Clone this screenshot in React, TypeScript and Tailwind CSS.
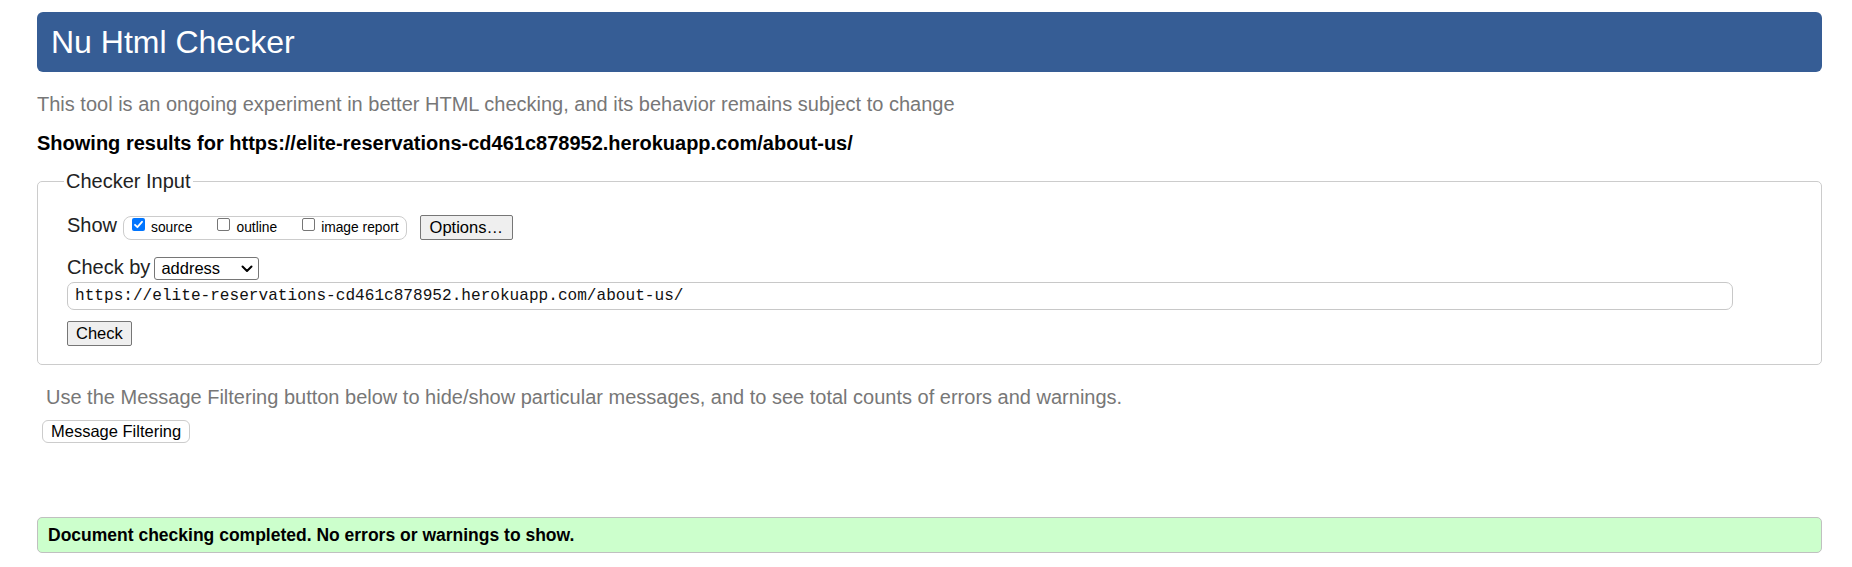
const PAGE_URL = "https://elite-reservations-cd461c878952.herokuapp.com/about-us/";

const SHOW_OPTIONS = [
  { label: "source", checked: true },
  { label: "outline", checked: false },
  { label: "image report", checked: false },
];

function Checkbox({ checked }: { checked: boolean }) {
  if (checked) {
    return (
      <span className="mb-[7px] flex h-[13px] w-[13px] items-center justify-center rounded-[2px] bg-[#0075ff]">
        <svg width="11" height="11" viewBox="0 0 11 11" fill="none">
          <path d="M2 5.8 L4.4 8.2 L9 2.8" stroke="white" strokeWidth="1.8" strokeLinecap="round" strokeLinejoin="round" />
        </svg>
      </span>
    );
  }
  return <span className="mb-[7px] block h-[13px] w-[13px] rounded-[2px] border border-[#767676] bg-white" />;
}

export default function App() {
  return (
    <div className="min-h-screen bg-white pl-[37px] pr-[30px] pt-[12px] font-['Liberation_Sans',Arial,sans-serif] text-[#222]">
      <header className="flex h-[60px] items-center rounded-[6px] bg-[#365d95] px-[14px]">
        <h1 className="text-[32px] leading-[37px] text-white">Nu Html Checker</h1>
      </header>

      <p className="mt-[21px] text-[20px] leading-[23px] text-[#777]">
        This tool is an ongoing experiment in better HTML checking, and its behavior remains subject to change
      </p>
      <p className="mt-[15.5px] text-[20px] font-bold leading-[23px] text-black">
        Showing results for {PAGE_URL}
      </p>

      <fieldset className="mt-[15.5px] rounded-[5px] border border-[#cccccc] px-[29px] pb-[18px]">
        <legend className="-ml-[3px] px-[2px] text-[20px] leading-[23px] text-[#222]">Checker Input</legend>

        <div className="mt-[21px] flex items-start">
          <span className="text-[20px] leading-[23px]">Show</span>
          <div className="ml-[6px] mt-[2px] flex h-[24px] items-center rounded-[8px] border border-[#cccccc] pl-[8px] pr-[7px]">
            {SHOW_OPTIONS.map((opt, i) => (
              <label key={opt.label} className={`flex items-center ${i > 0 ? "ml-[25px]" : ""}`}>
                <Checkbox checked={opt.checked} />
                <span className="ml-[6px] text-[13.8px] leading-[16px] text-black">{opt.label}</span>
              </label>
            ))}
          </div>
          <button className="ml-[13px] mt-[1px] h-[25px] rounded-[2px] border border-[#767676] bg-[#efefef] px-[9px] text-[16.5px] leading-[19px] text-black">
            Options…
          </button>
        </div>

        <div className="mt-[15.5px] flex items-start">
          <span className="text-[20px] leading-[23px]">Check by</span>
          <div className="ml-[4px] mt-[1.5px] flex h-[23px] w-[105px] items-center justify-between rounded-[3px] border border-[#767676] bg-white pl-[6px] pr-[5px]">
            <span className="text-[16.5px] leading-[19px] text-black">address</span>
            <svg width="12" height="8" viewBox="0 0 12 8" fill="none">
              <path d="M1.5 1.5 L6 6 L10.5 1.5" stroke="black" strokeWidth="2" strokeLinecap="round" strokeLinejoin="round" />
            </svg>
          </div>
        </div>

        <div className="mt-[2px] flex h-[28px] w-[1666px] items-center rounded-[7px] border border-[#c8c8c8] pl-[7px] font-['Liberation_Mono',monospace] text-[16.1px] text-[#111]">
          {PAGE_URL}
        </div>

        <button className="mt-[11px] h-[25px] rounded-[2px] border border-[#767676] bg-[#efefef] px-[8px] text-[16.5px] leading-[19px] text-black">
          Check
        </button>
      </fieldset>

      <p className="ml-[9px] mt-[20.5px] text-[20px] leading-[23px] text-[#777]">
        Use the Message Filtering button below to hide/show particular messages, and to see total counts of errors and warnings.
      </p>
      <button className="ml-[5px] mt-[11px] h-[23px] rounded-[6px] border border-[#cccccc] bg-white px-[8px] text-[16.5px] leading-[19px] text-black">
        Message Filtering
      </button>

      <div className="mt-[73px] flex h-[36px] items-center rounded-[5px] border border-[#c0c0c0] bg-[#ccffcc] pl-[10px]">
        <p className="text-[17.5px] font-bold leading-[20px] text-black">
          Document checking completed. No errors or warnings to show.
        </p>
      </div>
    </div>
  );
}
